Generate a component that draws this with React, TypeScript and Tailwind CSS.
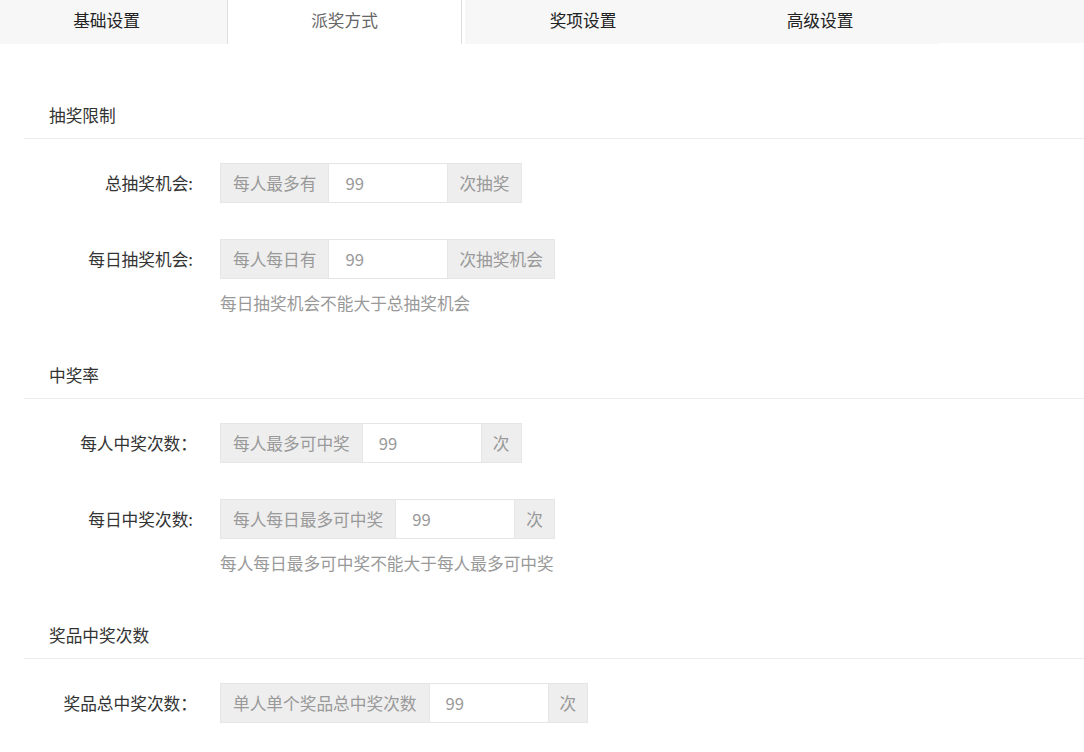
import React from "react";

interface FieldRow {
  label: string;
  prefix: string;
  value: string;
  suffix: string;
  hint?: string;
}

interface Section {
  title: string;
  rows: FieldRow[];
}

const sections: Section[] = [
  {
    title: "抽奖限制",
    rows: [
      { label: "总抽奖机会:", prefix: "每人最多有", value: "99", suffix: "次抽奖" },
      {
        label: "每日抽奖机会:",
        prefix: "每人每日有",
        value: "99",
        suffix: "次抽奖机会",
        hint: "每日抽奖机会不能大于总抽奖机会",
      },
    ],
  },
  {
    title: "中奖率",
    rows: [
      { label: "每人中奖次数：", prefix: "每人最多可中奖", value: "99", suffix: "次" },
      {
        label: "每日中奖次数:",
        prefix: "每人每日最多可中奖",
        value: "99",
        suffix: "次",
        hint: "每人每日最多可中奖不能大于每人最多可中奖",
      },
    ],
  },
  {
    title: "奖品中奖次数",
    rows: [{ label: "奖品总中奖次数：", prefix: "单人单个奖品总中奖次数", value: "99", suffix: "次" }],
  },
];

function Tabs() {
  return (
    <div className="flex h-[44px] bg-white text-[16.7px] leading-[24px]">
      <div className="flex w-[228px] items-center justify-center border-r border-[#dedede] bg-[#f7f7f7] pb-1 pr-[14px] text-[#222]">
        基础设置
      </div>
      <div className="flex w-[234px] items-center justify-center border-r border-[#dedede] bg-white pb-1 text-[#666]">
        派奖方式
      </div>
      <div className="ml-[3px] flex w-[236px] items-center justify-center bg-[#f7f7f7] pb-1 text-[#222]">
        奖项设置
      </div>
      <div className="flex w-[238px] items-center justify-center bg-[#f7f7f7] pb-1 text-[#222]">
        高级设置
      </div>
      <div className="h-[43px] flex-1 bg-[#f7f7f7]" />
    </div>
  );
}

function InputGroup({ prefix, value, suffix }: { prefix: string; value: string; suffix: string }) {
  return (
    <div className="flex h-[40px] text-[16.7px] leading-[24px] text-[#999]">
      <span className="flex items-center border border-[#e6e6e6] bg-[#eeeeee] px-3">{prefix}</span>
      <span className="flex w-[118px] items-center border-y border-[#e6e6e6] bg-white pl-4">{value}</span>
      <span className="flex items-center border border-[#e6e6e6] bg-[#eeeeee] px-[11px]">{suffix}</span>
    </div>
  );
}

export default function App() {
  return (
    <div
      className="min-h-screen bg-white pb-10"
      style={{ fontFamily: '"Noto Sans CJK SC", "Noto Sans", sans-serif' }}
    >
      <Tabs />
      <div className="pl-6">
        {sections.map((section, si) => (
          <div key={si} className={si === 0 ? "mt-[59px]" : "mt-[48px]"}>
            <div className="border-b border-[#ececec] pb-[11px] pl-[25px] text-[16.7px] leading-[24px] text-[#333]">
              {section.title}
            </div>
            <div className="mt-6 flex flex-col gap-9">
              {section.rows.map((row, ri) => (
                <div key={ri}>
                  <div className="flex items-center">
                    <div
                      className={`w-[173px] text-right text-[16.7px] leading-[24px] text-[#333] ${
                        row.label.endsWith(":") ? "pr-1" : ""
                      }`}
                    >
                      {row.label}
                    </div>
                    <div className="ml-[23px]">
                      <InputGroup prefix={row.prefix} value={row.value} suffix={row.suffix} />
                    </div>
                  </div>
                  {row.hint && (
                    <div className="ml-[196px] mt-3 text-[16.7px] leading-[24px] text-[#999]">{row.hint}</div>
                  )}
                </div>
              ))}
            </div>
          </div>
        ))}
      </div>
    </div>
  );
}
